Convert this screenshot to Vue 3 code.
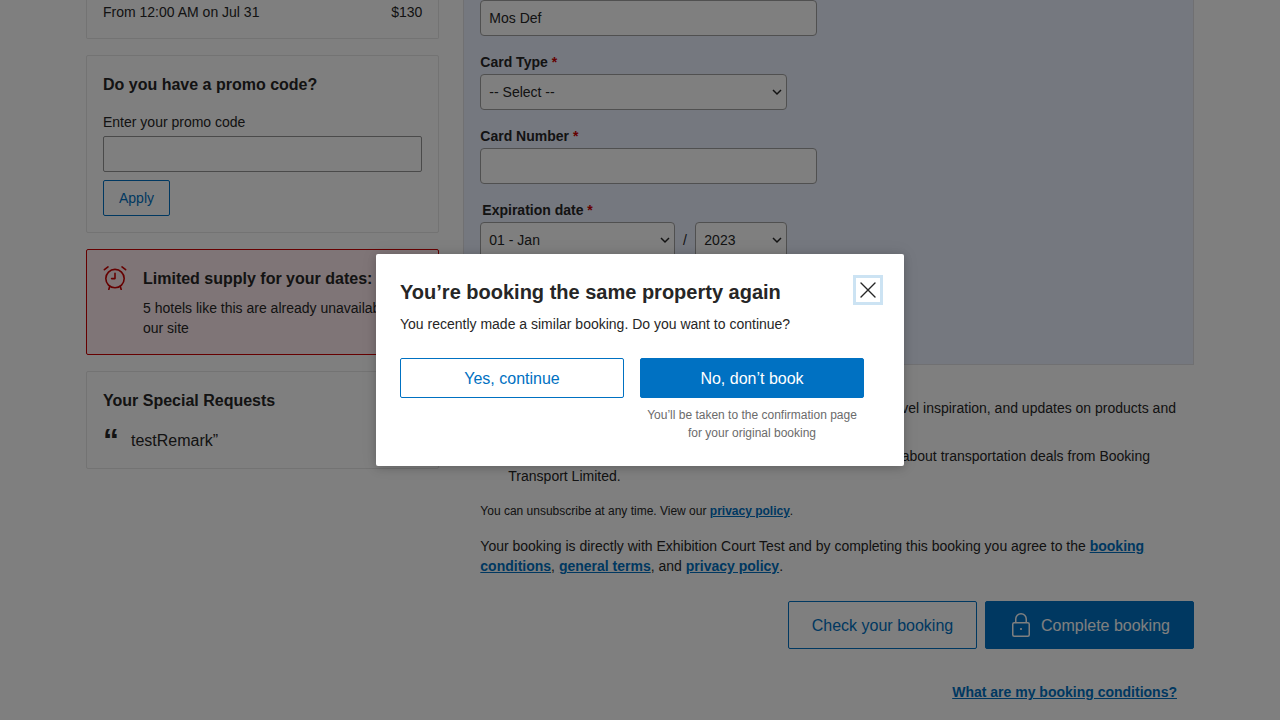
<script setup>
import { ref } from 'vue'

const cardholder = ref('Mos Def')
const cardType = ref('-- Select --')
const month = ref('01 - Jan')
const year = ref('2023')
</script>

<template>
  <div class="screen">
    <main class="page">
      <aside class="side">
        <section class="card fee">
          <span>From 12:00 AM on Jul 31</span>
          <span>$130</span>
        </section>

        <section class="card promo">
          <h3>Do you have a promo code?</h3>
          <label>Enter your promo code</label>
          <input type="text" />
          <button>Apply</button>
        </section>

        <section class="card alert">
          <svg class="alarm" width="24" height="24" viewBox="0 0 24 24" fill="none" stroke="#c00" stroke-width="1.6" stroke-linecap="round" stroke-linejoin="round">
            <circle cx="12" cy="12.6" r="9.2" />
            <path d="M12 7.3v5.3H8.6M1.4 3.7 5 .9M22.6 3.7 19 .9M6.700 20.400l-.9 3M17.300 20.400l.9 3" />
          </svg>
          <div>
            <h3>Limited supply for your dates:</h3>
            <p>5 hotels like this are already unavailable on our site</p>
          </div>
        </section>

        <section class="card requests">
          <h3>Your Special Requests</h3>
          <div class="remark">
            <span class="quote">“</span>
            <span>testRemark”</span>
          </div>
        </section>
      </aside>

      <div class="content">
        <section class="payment">
          <input v-model="cardholder" class="field" type="text" />
          <label>Card Type <b>*</b></label>
          <select v-model="cardType" class="type"><option>-- Select --</option></select>
          <label>Card Number <b>*</b></label>
          <input class="field" type="text" />
          <label class="expiry-label">Expiration date <b>*</b></label>
          <div class="expiry">
            <select v-model="month" class="month"><option>01 - Jan</option></select>
            <span>/</span>
            <select v-model="year" class="year"><option>2023</option></select>
          </div>
        </section>

        <section class="legal">
          <p class="consent first">travel inspiration, and updates on products and</p>
          <p class="consent second">about transportation deals from Booking</p>
          <p class="consent-end">Transport Limited.</p>
          <p class="unsubscribe">You can unsubscribe at any time. View our <a>privacy policy</a>.</p>
          <p class="terms">Your booking is directly with Exhibition Court Test and by completing this booking you agree to the <a>booking conditions</a>, <a>general terms</a>, and <a>privacy policy</a>.</p>
        </section>

        <div class="actions">
          <button class="check"><span>Check your booking</span></button>
          <button class="complete">
            <svg width="24" height="24" viewBox="0 0 24 24" fill="none" stroke="#fff" stroke-width="1.5" stroke-linejoin="round">
              <rect x="3.750" y="9.750" width="16.500" height="13.500" rx="1.500" />
              <path d="M6.750 9.750V6a5.250 5.250 0 0 1 10.500 0v3.750" />
              <circle cx="12" cy="16" r="1.100" fill="#fff" stroke="none" />
            </svg>
            <span>Complete booking</span>
          </button>
        </div>
        <div class="conditions"><a>What are my booking conditions?</a></div>
      </div>
    </main>

    <div class="overlay">
      <div class="modal" role="dialog">
        <h2>You’re booking the same property again</h2>
        <p class="question">You recently made a similar booking. Do you want to continue?</p>
        <div class="choices">
          <button class="yes">Yes, continue</button>
          <div class="no-column">
            <button class="no">No, don’t book</button>
            <p>You’ll be taken to the confirmation page for your original booking</p>
          </div>
        </div>
        <button class="close" aria-label="Close">
          <svg width="24" height="24" viewBox="0 0 24 24" fill="none" stroke="#262626" stroke-width="1.4" stroke-linecap="round">
            <path d="M5 5 19 19M19 5 5 19" />
          </svg>
        </button>
      </div>
    </div>
  </div>
</template>

<style>
body {
  margin: 0;
  background: #fff;
}
</style>

<style scoped>
.screen {
  position: relative;
  width: 1280px;
  height: 720px;
  overflow: hidden;
  background: #fff;
  color: #262626;
  font: 14px/20px "Liberation Sans", Arial, sans-serif;
}
.screen * {
  box-sizing: border-box;
}
h2, h3, p {
  margin: 0;
}
h3 {
  font-size: 16px;
  line-height: 24px;
  padding-top: 1px;
  height: 24px;
}
a {
  color: #0071c2;
  font-weight: 700;
  text-decoration: underline;
}
svg {
  display: block;
  flex: none;
}
button, input, select {
  font-family: inherit;
  font-size: 14px;
  line-height: 20px;
  color: #262626;
  margin: 0;
}
button {
  background: #fff;
  border: 1px solid #0071c2;
  border-radius: 2px;
  color: #0071c2;
  padding: 0;
}
.page {
  display: flex;
  gap: 24px;
  width: 1108px;
  margin: 0 auto;
}
.side {
  width: 353.33px;
  display: flex;
  flex-direction: column;
  gap: 16px;
}
.card {
  border: 1px solid #e6e6e6;
  border-radius: 2px;
  padding: 16px;
}
.fee {
  display: flex;
  justify-content: space-between;
  border-top: 0;
  padding-top: 2px;
  border-radius: 0 0 2px 2px;
}
.promo {
  display: flex;
  flex-direction: column;
  align-items: flex-start;
}
.promo label {
  margin-top: 16px;
}
.promo input {
  width: 100%;
  height: 36px;
  margin: 4px 0 8px;
  border: 1px solid #949494;
  border-radius: 2px;
  background: #fff;
}
.promo button {
  width: 67px;
  height: 36px;
}
.alert {
  display: flex;
  gap: 16px;
  background: #ffebee;
  border-color: #c00;
}
.alert p {
  margin-top: 8px;
}
.requests h3 {
  margin-bottom: 16px;
}
.remark {
  display: flex;
  height: 24px;
  padding-top: 1px;
  font-size: 16px;
  line-height: 24px;
}
.quote {
  width: 28px;
  margin-top: -1px;
  font-size: 32px;
  font-weight: 700;
}
.content {
  width: 730.67px;
}
.payment {
  height: 365px;
  padding: 0 16px;
  background: #ebf0ff;
  border: 1px solid #e1e1e4;
  border-top: 0;
  display: flex;
  flex-direction: column;
  align-items: flex-start;
}
.payment label {
  font-weight: 700;
  margin: 16px 0 2px;
}
.payment .expiry-label {
  margin-left: 2px;
}
.payment b {
  color: #c00;
}
.payment input, .payment select {
  height: 36px;
  border: 1px solid #a0a0a0;
  border-radius: 4px;
  background: #fff;
  padding: 0 8px;
  flex: none;
}
.payment select {
  appearance: none;
  background: #fff url("data:image/svg+xml,%3Csvg xmlns='http://www.w3.org/2000/svg' width='10' height='8' viewBox='0 0 10 8' fill='none' stroke='%23262626' stroke-width='1.5'%3E%3Cpath d='M1 2 5 6 9 2'/%3E%3C/svg%3E") no-repeat right 4px center;
}
.payment .field {
  width: 337px;
}
.type {
  width: 307px;
}
.expiry {
  display: flex;
  align-items: center;
}
.expiry span {
  width: 20px;
  padding-right: 1px;
  text-align: center;
}
.month {
  width: 195px;
}
.year {
  width: 92px;
}
.legal {
  padding: 33px 17px 0;
}
.consent {
  width: max-content;
  margin-left: auto;
}
.first {
  margin-right: 1px;
}
.second {
  margin-top: 28px;
  margin-right: 27px;
}
.consent-end {
  padding-left: 28px;
}
.unsubscribe {
  margin-top: 16px;
  font-size: 12px;
  line-height: 18px;
}
.terms {
  margin-top: 16px;
}
.actions {
  display: flex;
  justify-content: flex-end;
  gap: 8px;
  margin-top: 25px;
}
.actions button {
  height: 48px;
  font-size: 16px;
  line-height: 24px;
}
.actions span {
  display: block;
  padding-top: 2px;
}
.check {
  width: 189px;
}
.actions .complete {
  width: 209px;
  display: flex;
  align-items: center;
  justify-content: center;
  gap: 8px;
  background: #0071c2;
  color: #fff;
}
.conditions {
  margin-top: 33px;
  padding-right: 17px;
  text-align: right;
}
.overlay {
  position: absolute;
  inset: 0;
  display: flex;
  align-items: center;
  justify-content: center;
  background: rgba(0, 0, 0, 0.5);
}
.modal {
  position: relative;
  width: 528px;
  padding: 24px;
  background: #fff;
  border-radius: 2px;
  box-shadow: 0 2px 8px rgba(0, 0, 0, 0.16), 0 0 16px rgba(0, 0, 0, 0.1);
}
.modal h2 {
  font-size: 20px;
  line-height: 28px;
}
.question {
  margin-top: 8px;
}
.choices {
  display: flex;
  align-items: flex-start;
  gap: 16px;
  margin-top: 24px;
}
.choices button {
  width: 224px;
  height: 40px;
  padding-top: 2px;
  font-size: 16px;
}
.no-column {
  width: 224px;
}
.choices .no {
  display: block;
  background: #0071c2;
  color: #fff;
}
.no-column p {
  margin-top: 8px;
  color: #6b6b6b;
  font-size: 12px;
  line-height: 18px;
  text-align: center;
}
.modal .close {
  position: absolute;
  top: 24px;
  right: 24px;
  border: 0;
  border-radius: 0;
  box-shadow: 0 0 0 3px #cce3f3;
}
</style>
